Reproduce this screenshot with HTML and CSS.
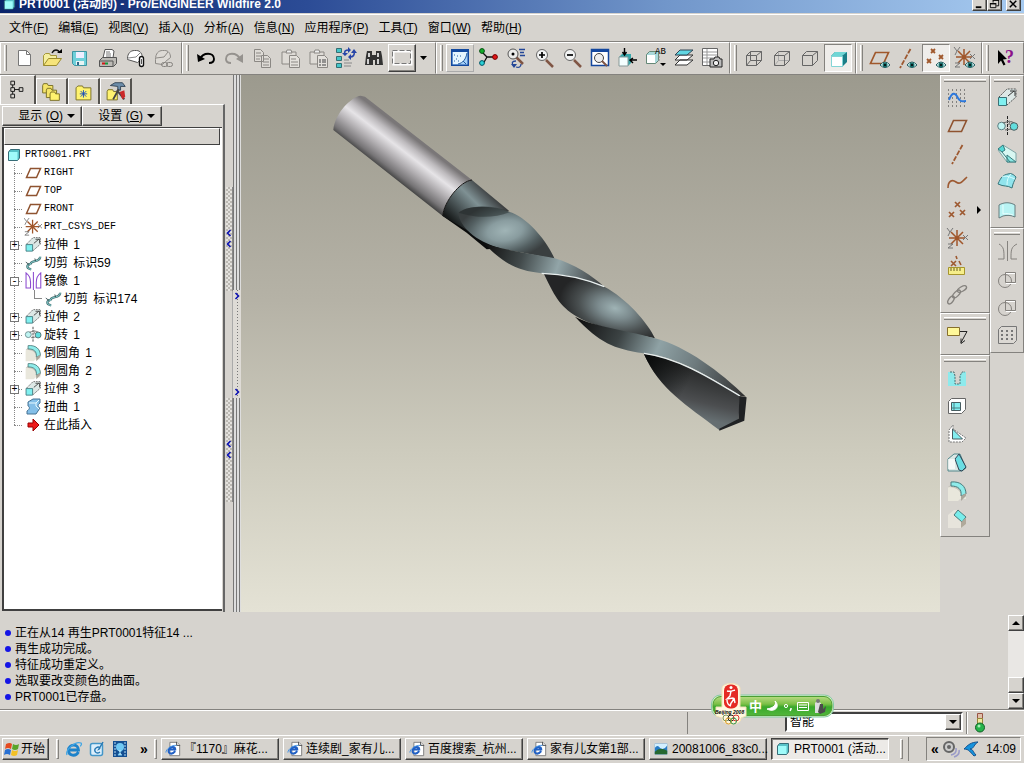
FILE: index.html
```html
<!DOCTYPE html>
<html lang="zh-CN">
<head>
<meta charset="utf-8">
<title>PRT0001 (活动的) - Pro/ENGINEER Wildfire 2.0</title>
<link rel="stylesheet" href="styles.css">
</head>
<body>
<svg class="defs" aria-hidden="true">
  <symbol id="plane" viewBox="0 0 18 18"><path d="M6.500 4.500h10l-4 9h-10z" fill="none" stroke="#8f5330" stroke-width="1.500"/></symbol>
  <symbol id="csys" viewBox="0 0 28 28"><path d="M14 6v16M6 14h16M8 8l12 12M20 8L8 20" stroke="#a0562b" stroke-width="1.500"/><path d="M4 4l3 4 3-4M7 8l-2 4M20 11l5 5m0-5l-5 5M5 20h5l-5 4h5" stroke="#777" fill="none"/></symbol>
  <symbol id="extrude" viewBox="0 0 28 28"><path d="M6 13L14 5h9v8l-9 8" fill="#dde8e6" stroke="#555" stroke-dasharray="2 1"/><path d="M15 12l6-5m-4 0h5v5" fill="none" stroke="#333"/><path d="M5.500 13.500h8v8h-8z" fill="#80f0f0" stroke="#3b7176"/></symbol>
  <symbol id="revolve" viewBox="0 0 28 28"><path d="M14.500 4v20" stroke="#222" stroke-dasharray="3 1"/><path d="M16 13c0-4 2-4 5-2" fill="none" stroke="#555"/><circle cx="8.500" cy="14" r="3.800" fill="#bff4f2" stroke="#5d7f82"/><circle cx="21" cy="14.500" r="3.800" fill="#62dede" stroke="#4d5e60"/><path d="M10 11l7-2m-5 9l6-1" stroke="#666"/></symbol>
  <symbol id="cut" viewBox="0 0 20 18"><path d="M18 2c0 3-2 4-6 5-4 1-5 2-5 4M7 10c-4 1-5 5 1 6" fill="none" stroke="#456f72" stroke-width="2.600"/><path d="M18 2c0 3-2 4-6 5-4 1-5 2-5 4M7 10c-4 1-5 5 1 6" fill="none" stroke="#8fe0df"/><path d="M2 8l4 3M12 4l1 3" stroke="#354c4e"/></symbol>
  <symbol id="mirror" viewBox="0 0 28 28"><path d="M14.500 3v22" stroke="currentColor" stroke-width="1.300"/><path d="M5.500 4v18.500h5.500v-7c0-6-2-9-5.500-11.500zM23.500 4v18.500H18v-7c0-6 2-9 5.500-11.500z" fill="none" stroke="currentColor" stroke-width="1.300"/></symbol>
  <symbol id="round" viewBox="0 0 28 28"><path d="M5 12l6-6 12 8v9h-6l-2 2H5z" fill="#e9e7dc"/><path d="M5 11l6-5c8 0 12 4 12 12l-5 5c1-7-3-12-13-12z" fill="#c8c6bc"/><path d="M8 6c9-1 15 4 15 12l-5 2c1-7-3-10-10-10z" fill="#8eecea" stroke="#4a7a7c"/><path d="M18 20v5l5-5v-3" fill="#aaa69b"/></symbol>
  <symbol id="part" viewBox="0 0 14 14"><path d="M1.500 4l2-2.500h9v8.500l-2 2.500h-9z" fill="#58c3c8" stroke="#376d78"/><path d="M2 4h8.500v8H2z" fill="#a0fbfa"/></symbol>
  <symbol id="ie" viewBox="0 0 18 18"><path d="M5.500 1.500h8l3 3v12h-11z" fill="#fff" stroke="#777"/><path d="M13 1v4h4" fill="#ddd" stroke="#4b4b4b"/><path d="M11.500 11.500c-4 5-9 2-7-2s7-3 7 0H5" fill="none" stroke="#2160c4" stroke-width="2.300"/><path d="M1 13C1 9 8 4 13 5" fill="none" stroke="#348ce6"/></symbol>
  <symbol id="eye" viewBox="0 0 12 8"><path d="M1 4q5-6 10 0-5 5-10 0" fill="#dff" stroke="#23595d"/><circle cx="6" cy="4" r="2.500" fill="#176a67"/><circle cx="6" cy="4" r="1"/></symbol>
  <symbol id="lens" viewBox="0 0 28 28"><path d="M16 16l7 7" stroke="#805645" stroke-width="2.500"/><circle cx="12" cy="11" r="5.500" fill="#f3f4f4" stroke="#666"/></symbol>
  <symbol id="clip" viewBox="0 0 28 28"><path d="M6 8h14v12H6z" fill="#dedbd6" stroke="#8b8884"/><path d="M10 9l1-3h4l1 3z" fill="#eee" stroke="#8b8884"/><path d="M13.500 11.500h7l3 3v9h-10z" fill="#e4e1dc" stroke="#8b8884"/></symbol>
  <symbol id="holes" viewBox="0 0 28 28"><circle cx="12" cy="16" r="6.500" fill="none" stroke="#85827e"/><path d="M12.500 7.500h10v10h-10z" fill="none" stroke="#85827e"/><path d="M13 8.500h9M13 18.500h10" stroke="#fff"/></symbol>
  <symbol id="datumline" viewBox="0 0 28 28"><path d="M19.500 5L9 24" stroke="#9d5931" stroke-width="1.800" stroke-dasharray="5 1.500"/></symbol>
</svg>

<header class="titlebar">
  <svg class="app-icon" viewBox="0 0 14 14"><use href="#part"/></svg>
  <h1>PRT0001 (活动的) - Pro/ENGINEER Wildfire 2.0</h1>
  <div class="winbtns">
    <button aria-label="最小化"><svg viewBox="0 0 14 14"><path d="M3 10h6v2H3z"/></svg></button><button aria-label="还原"><svg viewBox="0 0 14 14"><path d="M5.500 6V3.500h6v6H9M5 3.500h7M2.500 7.500h6v4h-6zM2 7h7" fill="none" stroke="#000"/></svg></button><button class="close" aria-label="关闭"><svg viewBox="0 0 14 14"><path d="M3 4l7 7m0-7l-7 7" stroke="#000" stroke-width="1.600"/></svg></button>
  </div>
</header>

<nav class="menubar">
  <button>文件(<u>F</u>)</button><button>编辑(<u>E</u>)</button><button>视图(<u>V</u>)</button><button>插入(<u>I</u>)</button><button>分析(<u>A</u>)</button><button>信息(<u>N</u>)</button><button>应用程序(<u>P</u>)</button><button>工具(<u>T</u>)</button><button>窗口(<u>W</u>)</button><button>帮助(<u>H</u>)</button>
</nav>

<div class="toolbar">
  <div class="group">
    <button aria-label="新建"><svg viewBox="0 0 28 28"><path d="M8.500 6.500h8l4 4v11h-12z" fill="#fff" stroke="#777"/><path d="M16.500 6.500v4h4" fill="none" stroke="#777"/></svg></button>
    <button aria-label="打开"><svg viewBox="0 0 28 28"><path d="M5.500 21.500v-10l2-2h4l1 2h6v3" fill="#f5efa0" stroke="#a5973a"/><path d="M5.500 21.500l5-7h13l-5 7z" fill="#f6e47a" stroke="#9a8b2d"/><path d="M14 9c2-4 6-4 8 0" fill="none" stroke="#111" stroke-width="1.300"/><path d="M19 9h5V5z"/></svg></button>
    <button aria-label="保存"><svg viewBox="0 0 28 28"><path d="M6.500 7.500h14v14h-12l-2-2z" fill="#6fd0da" stroke="#3f95a2"/><path d="M10 8h8v6h-8z" fill="#eef"/><path d="M10 17h8v4h-8z" fill="#e8f4f4"/><path d="M11 18h2v3h-2z" fill="#368"/></svg></button>
    <button aria-label="打印"><svg viewBox="0 0 28 28"><path d="M9 14l2-8.500h7l2 1.500-1 7" fill="#fff" stroke="#555"/><path d="M12 8h4m-4 2h5m-5 2h5" stroke="#777"/><path d="M5.500 16.500l3-3h14v6l-3 3h-14z" fill="#bcbab5" stroke="#555"/><path d="M6 17h13v5" fill="none" stroke="#555"/><path d="M8 18.500h3v2H8z" fill="#d01818"/><path d="M11 18.500h3v2h-3z" fill="#159a3b"/></svg></button>
    <button aria-label="邮件"><svg viewBox="0 0 28 28"><path d="M5.500 14.500c0-5 3-8 7-8h2c4 0 6 4 6 8l-5 4-10-3z" fill="#fff" stroke="#555"/><path d="M6 14l8-1 5-5" fill="none" stroke="#888"/><rect x="17.500" y="12.500" width="4" height="10" rx="2" fill="#fff" stroke="#111" stroke-width="1.400"/><path d="M19.500 15v5" stroke="#555"/></svg></button>
    <button aria-label="链接邮件" disabled><svg viewBox="0 0 28 28"><path d="M5.500 15.500c0-6 3-9 7-9h2c4 0 6 3 6 7l-5 4-3 3-7-1z" fill="#dddad5" stroke="#8d8a86"/><path d="M6 14l8-1 4-5" fill="none" stroke="#8d8a86"/><rect x="11.500" y="18.500" width="6" height="4" rx="2" fill="none" stroke="#85827e"/><rect x="16.500" y="18.500" width="6" height="4" rx="2" fill="none" stroke="#85827e"/></svg></button>
  </div>
  <div class="group">
    <button aria-label="撤消"><svg viewBox="0 0 28 28"><path d="M8 15c3-7 14-7 14 0 0 3-2 4-5 4" fill="none" stroke="#000" stroke-width="1.900"/><path d="M5 10l1 8 7-3z"/></svg></button>
    <button aria-label="重做" disabled><svg viewBox="0 0 28 28"><path d="M20 15c-3-7-14-7-14 0 0 3 2 4 5 4" fill="none" stroke="#95928e" stroke-width="1.900"/><path d="M23 10v9l-7-4z" fill="#95928e"/></svg></button>
    <button aria-label="复制" disabled><svg viewBox="0 0 28 28"><path d="M6.500 5.500h6l3 3v9h-9zM13.500 11.500h6l3 3v9h-9z" fill="#dedbd6" stroke="#8b8884"/><path d="M8 9h5m-5 3h5m-5 3h4m3 0h6m-6 3h6m-6 3h6" stroke="#8b8884"/></svg></button>
    <button aria-label="粘贴" disabled><svg viewBox="0 0 28 28"><use href="#clip"/><path d="M15 15h5m-5 3h7m-7 3h7" stroke="#8b8884"/></svg></button>
    <button aria-label="选择性粘贴" disabled><svg viewBox="0 0 28 28"><use href="#clip"/><path d="M15 16h2m1 0h4m-7 2h2m1 0h4m-7 3h2m1 0h4" stroke="#777" stroke-width="1.500"/></svg></button>
    <button aria-label="再生"><svg viewBox="0 0 28 28"><path d="M4.500 4.500h5v4h-5zM4.500 12.500h5v4h-5zM4.500 19.500h5v4h-5z" fill="#44c5c8" stroke="#326f74"/><path d="M12 16h5m-5 3h8m-8 3h7" stroke="#888"/><path d="M13 11c-1-4 0-5 4-5m5 2c1 3-1 5-4 5" fill="none" stroke="#2745a8" stroke-width="1.600"/><path d="M16 3v6l3-3zM19 10v6l-3-3zM10 9h6l-3 3zM19 9h6l-3-4z" fill="#2745a8"/></svg></button>
    <button aria-label="查找"><svg viewBox="0 0 28 28"><path d="M7 7h5v4h4V7h5l1 5 1 9h-8v-5h-2v5H5l1-9z" fill="#333"/><path d="M8 9h2v4H8zm9 0h2v4h-2zM7 15h2v5H7zm10 0h2v5h-2z" fill="#d2d2d2"/></svg></button>
    <button class="raised" aria-label="选取框"><svg viewBox="0 0 28 28"><path d="M5.500 7.500h18v13h-18z" fill="none" stroke="#fff" stroke-width="2"/><path d="M4.500 6.500h18v13h-18z" fill="none" stroke="#777" stroke-dasharray="5 2"/></svg></button>
    <button class="drop" aria-label="选取选项"><svg viewBox="0 0 16 28"><path d="M4 12h7l-3.500 4z"/></svg></button>
  </div>
  <div class="group">
    <button class="raised light" aria-label="旋转中心"><svg viewBox="0 0 28 28"><path d="M5 5h18v17H5z" fill="#12499f"/><path d="M6.500 8h15v12.500h-15z" fill="#a6d2fa"/><path d="M7 8h14c-1 7-4 11-9 12H7z" fill="#e4f5ff"/><path d="M21 9c-1 6-4 10-9 11M17 17l3 3" stroke="#225aa0" fill="none"/><path d="M8 11h1m2 1h1m2 0h1m-5 3h1m-3 2h1m3 0h1" stroke="#225aa0"/></svg></button>
    <button aria-label="定向模式"><svg viewBox="0 0 28 28"><path d="M8 8l5 5h9M13 13l-4 7" fill="none" stroke="#111" stroke-width="1.300"/><circle cx="8" cy="7" r="2.400" fill="#12ad29" stroke="#074f12"/><circle cx="21" cy="13" r="2.400" fill="#e01616" stroke="#700"/><circle cx="8" cy="19" r="2.400" fill="#2bd1d6" stroke="#056"/></svg></button>
    <button aria-label="外观"><svg viewBox="0 0 28 28"><path d="M14 13l7 7" stroke="#805645" stroke-width="2.500"/><circle cx="11" cy="10" r="5" fill="#ececea" stroke="#555"/><circle cx="11" cy="10" r="1.500"/><path d="M17 5.500h6m-5 3h4m-4 3h5M12 22c-3-3-2-5 2-5m0 6c3 1 5 0 5-3" fill="none" stroke="#234697" stroke-width="1.300"/><path d="M9 20h6l-3 4z" fill="#234697"/></svg></button>
    <button aria-label="放大"><svg viewBox="0 0 28 28"><use href="#lens"/><path d="M9 11h6m-3-3v6" stroke="#000" stroke-width="1.700"/></svg></button>
    <button aria-label="缩小"><svg viewBox="0 0 28 28"><use href="#lens"/><path d="M9 11h6" stroke="#000" stroke-width="1.700"/></svg></button>
    <button aria-label="重新调整"><svg viewBox="0 0 28 28"><path d="M5.500 5.500h17v16h-17z" fill="#fff" stroke="#14479e" stroke-width="1.500"/><path d="M5 5h18v3H5z" fill="#14479e"/><circle cx="13" cy="14" r="4.500" fill="#eee" stroke="#444"/><path d="M16 17l5 5" stroke="#805645" stroke-width="2"/></svg></button>
    <button aria-label="重定向"><svg viewBox="0 0 28 28"><path d="M5 13l3-3h9v9l-3 3H5z" fill="#36a6a9"/><path d="M5 13h9v9H5z" fill="#f4ffff" stroke="#899"/><path d="M10.500 4v7m-2-3l2 3 2-3M23 16h-7m3-2l-3 2 3 3" fill="none" stroke="#000" stroke-width="1.400"/></svg></button>
    <button aria-label="已命名视图"><svg viewBox="0 0 28 28"><path d="M4.500 10.500l3-3h9v9l-3 3h-9z" fill="#a9d8da" stroke="#687"/><path d="M5 11h8v8H5z" fill="#fff"/><text x="13" y="10" class="glyph">AB</text><path d="M16 13h2m-2 3h2" stroke="#888"/><path d="M18 19h6l-3 3z"/></svg></button>
    <button aria-label="层"><svg viewBox="0 0 28 28"><path d="M5 21l5-5h13l-6 5zM5 16l5-5h13l-6 5z" fill="#fff" stroke="#333"/><path d="M5 11l5-5h13l-6 5z" fill="#61d7e3" stroke="#345"/></svg></button>
    <button aria-label="视图管理器"><svg viewBox="0 0 28 28"><path d="M4.500 4.500h15v17h-15z" fill="#fff" stroke="#666"/><path d="M5 8h14M5 11h14M5 14h14M5 18h14M9 5v16" stroke="#999"/><path d="M12 15h4l1-2h4l1 2h2v8H12z" fill="#bbb" stroke="#222"/><circle cx="18" cy="19" r="2.700" fill="#eee" stroke="#222"/></svg></button>
  </div>
  <div class="group">
    <button aria-label="线框"><svg viewBox="0 0 28 28"><path d="M6.500 11.500h10v10h-10zM10.500 7.500h11v9h-11zM6.500 11.500l4-4m6 4l5-4m-5 14l5-5m-15 5l4-5" fill="none" stroke="#666"/></svg></button>
    <button aria-label="隐藏线"><svg viewBox="0 0 28 28"><path d="M10.500 7.500v9h11M6.500 21.500l4-5" fill="none" stroke="#aaa"/><path d="M6.500 11.500h10v10h-10zM6.500 11.500l4-4h11v9l-5 5m0-10l5-4" fill="none" stroke="#666"/></svg></button>
    <button aria-label="无隐藏线"><svg viewBox="0 0 28 28"><path d="M6.500 11.500h10v10h-10zM6.500 11.500l4-4h11v9l-5 5m0-10l5-4" fill="none" stroke="#666"/></svg></button>
    <button class="pressed" aria-label="着色" aria-pressed="true"><svg viewBox="0 0 28 28"><path d="M7 12l4-4h12v10l-5 5z" fill="#1b7e87"/><path d="M7 12l4-4h12l-5 4z" fill="#70d6d5"/><path d="M7.500 12.500h11v10h-11z" fill="#fff" stroke="#83d5d6"/></svg></button>
  </div>
  <div class="group">
    <button aria-label="基准平面显示"><svg viewBox="0 0 28 28"><path d="M9.500 8.500h13l-5 11h-13z" fill="none" stroke="#a0582c" stroke-width="1.700"/><use href="#eye" x="13" y="17" width="12" height="8"/></svg></button>
    <button aria-label="基准轴显示"><svg viewBox="0 0 28 28"><use href="#datumline" x="-3" width="28" height="28"/><use href="#eye" x="12" y="17" width="12" height="8"/></svg></button>
    <button class="pressed" aria-label="基准点显示" aria-pressed="true"><svg viewBox="0 0 28 28"><path d="M9 5l4 4m0-4l-4 4M5 15l4 4m0-4l-4 4M17 11l4 4m0-4l-4 4" stroke="#a0582c" stroke-width="1.800"/><use href="#eye" x="13" y="17" width="12" height="8"/></svg></button>
    <button aria-label="坐标系显示"><svg viewBox="0 0 28 28"><use href="#csys" width="28" height="28" y="-1"/><use href="#eye" x="14" y="17" width="12" height="8"/></svg></button>
  </div>
  <div class="group">
    <button aria-label="帮助"><svg viewBox="0 0 28 28"><path d="M6 6l9 9-4 .500 2.500 5-2 1-2.500-5L6 20z"/><text x="13" y="19" class="qmark">?</text></svg></button>
  </div>
</div>

<main class="work">
  <aside class="navigator">
    <div class="tabs">
      <button class="on" aria-label="模型树"><svg viewBox="0 0 28 28"><path d="M9.500 4.500h4v4h-4zM9.500 11.500h4v4h-4zM9.500 18.500h4v4h-4zM18.500 11.500h4v4h-4zM11.500 8.500v3m0 4v3m2-5h5" fill="none" stroke="#111"/></svg></button>
      <button aria-label="文件夹浏览器"><svg viewBox="0 0 28 28"><path d="M5 7l1-2h4l1 2h5v8H5z" fill="#f5e56a" stroke="#776d24"/><path d="M9 12l1-2h4l1 2h5v8H9z" fill="#f5e56a" stroke="#776d24"/><path d="M13 16l1-2h4l1 2h4v7H13z" fill="#fff36f" stroke="#776d24"/></svg></button>
      <button aria-label="收藏夹"><svg viewBox="0 0 28 28"><path d="M6.500 9.500l2-2h5l1 2h8v13h-16z" fill="#fff36f" stroke="#776d24"/><path d="M14.500 12v8m-4-4h8m-7-3l6 6m0-6l-6 6" stroke="#194ebb"/></svg></button>
      <button aria-label="连接"><svg viewBox="0 0 28 28"><path d="M5.500 13.500l1-2h5l1 2h4v9h-11z" fill="#fff36f" stroke="#776d24"/><path d="M9 7l5-3h8l3 4h-5v4h-3V8z" fill="#6d8eab" stroke="#345"/><path d="M18 11l-6 11M16 12l8 10" stroke="#444" stroke-width="2"/><path d="M19 14l5-2 1 7-3 3z" fill="#cb2828"/></svg></button>
    </div>
    <div class="nav-page">
      <div class="nav-actions">
        <button>显示 (<u>O</u>)<span class="caret"></span></button><button>设置 (<u>G</u>)<span class="caret"></span></button>
      </div>
      <div class="tree">
        <div class="tree-head"></div>
        <div class="root latin"><svg viewBox="0 0 14 14"><use href="#part"/></svg>PRT0001.PRT</div>
        <ul class="nodes">
          <li class="latin"><i></i><svg><use href="#plane"/></svg>RIGHT</li>
          <li class="latin"><i></i><svg><use href="#plane"/></svg>TOP</li>
          <li class="latin"><i></i><svg><use href="#plane"/></svg>FRONT</li>
          <li class="latin"><i></i><svg viewBox="4 4 21 21"><use href="#csys" width="28" height="28"/></svg>PRT_CSYS_DEF</li>
          <li><i></i><button aria-label="展开">+</button><svg viewBox="3 3 22 22"><use href="#extrude" width="28" height="28"/></svg>拉伸 <span>1</span></li>
          <li><i></i><svg><use href="#cut"/></svg>切剪 <span>标识59</span></li>
          <li><i></i><button aria-label="折叠">-</button><svg class="purple" viewBox="3 3 22 22"><use href="#mirror" width="28" height="28"/></svg>镜像 <span>1</span></li>
          <li class="child"><i></i><svg><use href="#cut"/></svg>切剪 <span>标识174</span></li>
          <li><i></i><button aria-label="展开">+</button><svg viewBox="3 3 22 22"><use href="#extrude" width="28" height="28"/></svg>拉伸 <span>2</span></li>
          <li><i></i><button aria-label="展开">+</button><svg viewBox="3 3 23 23"><use href="#revolve" width="28" height="28"/></svg>旋转 <span>1</span></li>
          <li><i></i><svg viewBox="3 4 22 22"><use href="#round" width="28" height="28"/></svg>倒圆角 <span>1</span></li>
          <li><i></i><svg viewBox="3 4 22 22"><use href="#round" width="28" height="28"/></svg>倒圆角 <span>2</span></li>
          <li><i></i><button aria-label="展开">+</button><svg viewBox="3 3 22 22"><use href="#extrude" width="28" height="28"/></svg>拉伸 <span>3</span></li>
          <li><i></i><svg viewBox="0 0 18 18"><path d="M4 4l5-3h7v4c-3 2-2 4 0 5l-4 6H3v-3c3-2 3-4 1-5z" fill="#84bfe8" stroke="#467293"/><path d="M5 5h7l3-3M12 5v3l3 3" fill="none" stroke="#e8faff"/></svg>扭曲 <span>1</span></li>
          <li><i></i><svg viewBox="0 0 18 18"><path d="M4 7h5V3l6 6-6 6v-4H4z" fill="#ed1c1c" stroke="#900"/></svg>在此插入</li>
        </ul>
      </div>
    </div>
  </aside>
  <div class="sash">
    <button aria-label="折叠导航器"><svg viewBox="0 0 6 20"><path d="M4.500 1L1.500 4l3 3M4.500 12l-3 3 3 3" fill="none" stroke="#0c12b4" stroke-width="1.600"/></svg></button>
    <div></div>
    <button aria-label="折叠导航器"><svg viewBox="0 0 6 20"><path d="M4.500 1L1.500 4l3 3M4.500 12l-3 3 3 3" fill="none" stroke="#0c12b4" stroke-width="1.600"/></svg></button>
  </div>
  <div class="splitter"><button aria-label="展开"><svg viewBox="0 0 6 8"><path d="M1.500 1l3 3-3 3" fill="none" stroke="#0c12b4" stroke-width="1.600"/></svg><svg viewBox="0 0 6 8"><path d="M1.500 1l3 3-3 3" fill="none" stroke="#0c12b4" stroke-width="1.600"/></svg></button></div>
  <section class="viewport" aria-label="模型">
    <svg viewBox="241 75 699 537" preserveAspectRatio="xMinYMin meet">
      <defs>
        <linearGradient id="shank" gradientUnits="userSpaceOnUse" x1="204" y1="279" x2="283" y2="176"><stop offset="0" stop-color="#484848"/><stop offset=".12" stop-color="#777577"/><stop offset=".38" stop-color="#b3b0b3"/><stop offset=".62" stop-color="#e6e4e7"/><stop offset=".8" stop-color="#bdbabd"/><stop offset="1" stop-color="#7a7778"/></linearGradient>
        <linearGradient id="collar" gradientUnits="userSpaceOnUse" x1="385" y1="415" x2="485" y2="315"><stop offset="0" stop-color="#151818"/><stop offset=".35" stop-color="#4d585a"/><stop offset=".65" stop-color="#7f9194"/><stop offset="1" stop-color="#3c3f40"/></linearGradient>
        <radialGradient id="flute1" gradientUnits="userSpaceOnUse" cx="0" cy="0" r="150" gradientTransform="translate(555 452) rotate(-10) scale(1 .58)"><stop offset="0" stop-color="#a0b4b6"/><stop offset=".35" stop-color="#899c9f"/><stop offset=".75" stop-color="#525e60"/><stop offset="1" stop-color="#3a3f40"/></radialGradient>
        <radialGradient id="flute2" gradientUnits="userSpaceOnUse" cx="0" cy="0" r="170" gradientTransform="translate(885 685) rotate(15) scale(1 .6)"><stop offset="0" stop-color="#9fb3b5"/><stop offset=".3" stop-color="#7c8b8e"/><stop offset=".65" stop-color="#4a5051"/><stop offset="1" stop-color="#242526"/></radialGradient>
        <linearGradient id="band1" gradientUnits="userSpaceOnUse" x1="500" y1="500" x2="850" y2="615"><stop offset="0" stop-color="#111"/><stop offset=".3" stop-color="#424a4b"/><stop offset=".6" stop-color="#92a5a8"/><stop offset=".78" stop-color="#667174"/><stop offset="1" stop-color="#383a3b"/></linearGradient>
        <linearGradient id="band2" gradientUnits="userSpaceOnUse" x1="780" y1="720" x2="1270" y2="940"><stop offset="0" stop-color="#111"/><stop offset=".24" stop-color="#3c4344"/><stop offset=".46" stop-color="#8fa2a5"/><stop offset=".68" stop-color="#6f7c7f"/><stop offset="1" stop-color="#333"/></linearGradient>
        <linearGradient id="face3" gradientUnits="userSpaceOnUse" x1="1160" y1="860" x2="1125" y2="1010"><stop offset="0" stop-color="#242525"/><stop offset=".45" stop-color="#3d3f40"/><stop offset=".7" stop-color="#4c4e50"/><stop offset="1" stop-color="#656e71"/></linearGradient>
        <linearGradient id="shade3" gradientUnits="userSpaceOnUse" x1="980" y1="830" x2="1110" y2="900"><stop offset="0" stop-color="#080a0a"/><stop offset="1" stop-color="#080a0a" stop-opacity="0"/></linearGradient>
      </defs>
      <g transform="translate(320 80) scale(.3333)">
        <path d="M368 408l72 50 60 50 80-5-150-120z" fill="#0b0c0c"/>
        <path d="M456 300L567 392 450 455 368 408C372 365 420 306 456 300z" fill="url(#collar)"/>
        <path d="M122 47C95 50 45 98 40 150L368 408C372 365 420 306 456 300L135 50z" fill="url(#shank)"/>
        <path d="M368 408C372 365 420 304 456 300" fill="none" stroke="#151515" stroke-width="3"/>
        <path d="M415 400C430 380 500 370 567 395C620 410 680 480 704 537C650 525 590 515 550 507C480 490 422 450 415 400z" fill="url(#flute1)"/>
        <path d="M416 398C440 378 510 370 570 396C520 415 470 415 416 398z" fill="#222727" opacity=".45"/>
        <path d="M492 490C540 508 600 515 704 535C760 550 820 590 853 620C800 597 735 583 665 580C590 572 550 550 492 490z" fill="url(#band1)"/>
        <path d="M672 582C740 580 800 600 853 620C920 655 985 730 1005 775C930 760 820 740 780 715C720 680 710 660 672 582z" fill="url(#flute2)"/>
        <path d="M665 580Q765 583 853 620" fill="none" stroke="#e8efef" stroke-width="4"/>
        <path d="M765 710C820 740 940 755 1005 775C1100 800 1200 875 1278 950L1262 948C1180 900 1080 830 970 820C880 805 840 790 765 710z" fill="url(#band2)"/>
        <path d="M972 822C1080 835 1180 900 1260 948L1256 1018 1198 1050C1100 975 1020 930 972 822z" fill="url(#face3)"/>
        <path d="M972 822C1080 835 1180 900 1260 948L1256 1018 1198 1050C1100 975 1020 930 972 822z" fill="url(#shade3)"/>
        <path d="M972 820C1080 835 1180 900 1260 948" fill="none" stroke="#e6eded" stroke-width="4"/>
        <path d="M1258 948l22 4-7 70-75 30v-6l58-30z" fill="#202224"/>
      </g>
    </svg>
  </section>
  <div class="palettes">
    <div class="column first">
      <div class="palette">
        <button aria-label="草绘"><svg viewBox="0 0 28 28"><path d="M5 6h19M5 10h19M5 14h19M5 18h19M5 22h19" stroke="#333" stroke-dasharray="1 3"/><path d="M6 16c3-8 6-8 9-2 3 5 5 3 8 3" fill="none" stroke="#2c78dc" stroke-width="2"/></svg></button>
        <button aria-label="基准平面"><svg viewBox="0 0 28 28"><path d="M10.500 8.500h13l-5 11h-13z" fill="none" stroke="#8f5330" stroke-width="1.600"/></svg></button>
        <button aria-label="基准轴"><svg viewBox="0 0 28 28"><use href="#datumline"/></svg></button>
        <button aria-label="基准曲线"><svg viewBox="0 0 28 28"><path d="M5 20c0-7 4-9 8-6s6 0 11-5" fill="none" stroke="#9d5931" stroke-width="1.600"/></svg></button>
        <button aria-label="基准点"><svg viewBox="0 0 28 28"><path d="M12 6l5 5m0-5l-5 5M6 16l5 5m0-5l-5 5M17 14l5 5m0-5l-5 5" stroke="#9d5931" stroke-width="1.700"/></svg></button>
        <button class="flyout" aria-label="基准点选项"><svg viewBox="0 0 8 12"><path d="M2 2v8l4-4z"/></svg></button>
        <button aria-label="坐标系"><svg viewBox="0 0 28 28"><use href="#csys"/></svg></button>
        <button aria-label="分析特征"><svg viewBox="0 0 28 28"><path d="M8 9l5 5m0-5l-5 5M13 4l1 3m2 2l2 4" stroke="#9d5931" stroke-width="1.600"/><path d="M5.500 15.500h16v7h-16z" fill="#f6ee8a" stroke="#a6952d"/><path d="M8 16v3m3-3v3m3-3v3m3-3v3" stroke="#665c20"/></svg></button>
        <button aria-label="链" disabled><svg viewBox="0 0 28 28"><g fill="none" stroke="#85827e" stroke-width="1.400"><ellipse cx="8" cy="20" rx="4.500" ry="2.300" transform="rotate(-55 8 20)"/><ellipse cx="13.500" cy="14" rx="5" ry="2.300" transform="rotate(-45 13.500 14)"/><ellipse cx="19" cy="9" rx="5" ry="2.300" transform="rotate(-30 19 9)"/></g></svg></button>
      </div>
      <div class="palette">
        <button aria-label="注释"><svg viewBox="0 0 28 28"><path d="M4.500 5.500h12v8h-12z" fill="#fff899" stroke="#876f2c"/><path d="M17 9.500h7l-6 11m0-4v5l4-3" fill="none" stroke="#222"/></svg></button>
      </div>
      <div class="palette">
        <button aria-label="孔"><svg viewBox="0 0 28 28"><path d="M5 8h4l3 3v9h5v-9l3-3h3v14H5z" fill="#8deaec"/><path d="M7 8h4l1 4v8h5v-8l2-4h3" fill="none" stroke="#447074" stroke-dasharray="2 1"/></svg></button>
        <button aria-label="壳"><svg viewBox="0 0 28 28"><path d="M5.500 9.500l3-3h14v11l-4 4h-13z" fill="#fff" stroke="#666"/><path d="M8.500 10.500h9v8h-9z" fill="#83eef0" stroke="#475c60"/><path d="M11 11v7m-2-2h8" stroke="#497f84"/></svg></button>
        <button aria-label="筋"><svg viewBox="0 0 28 28"><path d="M6 22V10l4-5v4l13 9-4 4z" fill="#fff" stroke="#777" stroke-dasharray="2 1"/><path d="M9.500 9v10h10z" fill="#83eef0" stroke="#475c60"/></svg></button>
        <button aria-label="拔模"><svg viewBox="0 0 28 28"><path d="M5 11l6-5h6l6 14-4 3H5z" fill="#dce7e5" stroke="#53888b"/><path d="M12 11l4-5 7 13-4 4-3-1z" fill="#6bdde3" stroke="#345"/><path d="M5 11h7v10H5z" fill="#fff" opacity=".7"/></svg></button>
        <button aria-label="倒圆角"><svg viewBox="0 0 28 28"><use href="#round"/></svg></button>
        <button aria-label="倒角"><svg viewBox="0 0 28 28"><path d="M5 11l6-5h6l6 7v7l-5 4H5z" fill="#e7e4dc"/><path d="M11 11l4-5 8 7-4 5z" fill="#78edeb" stroke="#4a787b"/><path d="M18 18v6l5-4v-6" fill="#b0a99b"/></svg></button>
      </div>
    </div>
    <div class="column second">
      <div class="palette">
        <button aria-label="拉伸"><svg viewBox="0 0 28 28"><use href="#extrude"/></svg></button>
        <button aria-label="旋转"><svg viewBox="0 0 28 28"><use href="#revolve"/></svg></button>
        <button aria-label="可变截面扫描"><svg viewBox="0 0 28 28"><path d="M10 5l13 8v9h-9L5 10z" fill="#d8f7f2" stroke="#7fa5a5"/><path d="M5 9l5-4 2 5-3 2z" fill="#55d9d6" stroke="#397a7c"/><path d="M14 15l9 7h-9zM9 12l8 10" fill="#8ce8e4" stroke="#397a7c"/></svg></button>
        <button aria-label="边界混合"><svg viewBox="0 0 28 28"><path d="M5 16c3-7 5-9 10-10 3-1 5 0 8 3-2 5-3 6-4 11-5-3-8-1-14-4z" fill="#91e4ed" stroke="#37757a"/><path d="M9 9c4-2 8 0 13 2M14 17c0-5 1-8 4-11" fill="none" stroke="#d9ffff"/></svg></button>
        <button aria-label="造型"><svg viewBox="0 0 28 28"><path d="M6 9c5-3 11-3 16 0v12c-4-2-8-2-12-1l-4 2z" fill="#b8f3f3" stroke="#667c7e"/><path d="M10 9v9c4-1 7 0 10 1" fill="none" stroke="#e8ffff"/></svg></button>
      </div>
      <div class="palette">
        <button aria-label="镜像" disabled><svg class="gray" viewBox="0 0 28 28"><path d="M14.500 4v20M6 7c5 3 5 6 5 15H5M24 7c-6 3-6 6-6 15h6" fill="none" stroke="currentColor"/></svg></button>
        <button aria-label="合并" disabled><svg viewBox="0 0 28 28"><use href="#holes"/></svg></button>
        <button aria-label="修剪" disabled><svg viewBox="0 0 28 28"><use href="#holes"/></svg></button>
        <button aria-label="阵列" disabled><svg viewBox="0 0 28 28"><path d="M5.500 8.500l3-3h15v14l-3 3h-15z" fill="#dbd8d3" stroke="#777"/><path d="M8 10h12M8 14h12M8 18h12" stroke="#777" stroke-width="2" stroke-dasharray="2 3"/></svg></button>
      </div>
    </div>
  </div>
</main>

<section class="messages">
  <ul>
    <li>正在从14 再生PRT0001特征14 ...</li>
    <li>再生成功完成。</li>
    <li>特征成功重定义。</li>
    <li>选取要改变颜色的曲面。</li>
    <li>PRT0001已存盘。</li>
  </ul>
  <div class="scroll"><button aria-label="向上"><svg viewBox="0 0 14 14"><path d="M3 9h8L7 5z"/></svg></button><div class="track"></div><button class="thumb" aria-label="滑块"></button><button aria-label="向下"><svg viewBox="0 0 14 14"><path d="M3 5h8L7 9z"/></svg></button></div>
</section>

<div class="status">
  <div class="status-left"></div>
  <div class="status-filter">
    <div class="combo"><select aria-label="选取过滤器"><option>智能</option></select><span class="combo-arrow"><svg viewBox="0 0 14 14"><path d="M3 5h8L7 9z"/></svg></span></div>
  </div>
  <div class="status-light"><svg viewBox="0 0 12 22"><path d="M3.500 1.500h5v5h-5z" fill="#dec0aa" stroke="#9a5244"/><path d="M3.500 6.500h5v6h-5z" fill="#efe9a0" stroke="#938638"/><circle cx="6" cy="15.500" r="4.500" fill="#25b34a" stroke="#115f26"/><circle cx="5" cy="14" r="1.500" fill="#a8eeb6"/></svg></div>
  <div class="ime"><svg viewBox="0 0 124 44">
    <defs><linearGradient id="pill" x2="0" y2="1"><stop offset="0" stop-color="#b9db83"/><stop offset=".4" stop-color="#7bc046"/><stop offset=".55" stop-color="#39a82b"/><stop offset="1" stop-color="#51b63b"/></linearGradient></defs>
    <rect x=".500" y="12" width="122" height="22" rx="9" fill="#d9f1c2" stroke="#84c9a6"/><rect x="2" y="13.500" width="119" height="19" rx="8" fill="url(#pill)" stroke="#4c9e34"/>
    <path d="M11 5c0-6 18-6 18 0v19h6v9l-5 2c0 6-6 5-10 7-4-2-9-1-9-7l-6-2v-9h6z" fill="#fff7df" stroke="#f3e0b8"/>
    <rect x="13" y="1.500" width="14" height="24" rx="6" fill="#e52a24"/><circle cx="20" cy="4.500" r="1.500" fill="#fff"/><path d="M16 8c3 1 5 0 8-1m-4 1l-1 5-3 3 6-1c2 3-4 5-2 7M16 17c0 3 1 5 4 6m3-8l1 5" fill="none" stroke="#fff" stroke-width="1.400"/>
    <text x="4" y="31" class="beijing">Beijing 2008</text>
    <g fill="none" stroke-width="1"><circle cx="15" cy="35" r="3" stroke="#7a965c"/><circle cx="20" cy="35" r="3" stroke="#222"/><circle cx="25" cy="35" r="3" stroke="#d33"/><circle cx="17.500" cy="38" r="3" stroke="#dc9b26"/><circle cx="22.500" cy="38" r="3" stroke="#2e9449"/></g>
    <text x="38" y="28" class="zhong">中</text>
    <path d="M64 18c2 4-2 7-8 8 7 4 14-2 8-8z" fill="#fff" stroke="#fff"/><circle cx="75" cy="23" r="1.600" fill="none" stroke="#fff"/><path d="M80 25v1l-1 2" stroke="#fff" stroke-width="1.500" fill="none"/>
    <path d="M86.500 19.500h11v8h-11zM88 22h8m-8 2.500h8" fill="none" stroke="#fff"/><path d="M104 20l2-2 4 2v10h-6z" fill="#ddd"/><path d="M109 21h3v5l3-3-1 6-5 2-2-2z" fill="#4b4b4b"/><circle cx="107" cy="18" r="2" fill="#777"/>
  </svg></div>
</div>

<footer class="taskbar">
  <button class="start"><svg viewBox="0 0 18 18"><path d="M3 4q4-2 6 0L8 9Q5 7 2 9z" fill="#e64b21"/><path d="M10 4q3 2 6 0l-1 5q-3 2-6 0z" fill="#5aa52a"/><path d="M2 10q3-2 6 0l-1 5q-3-2-6 0z" fill="#2970d2"/><path d="M9 10q3 2 6 0l-1 5q-3 2-6 0z" fill="#f2c126"/></svg>开始</button>
  <span class="grip"></span>
  <div class="quick">
    <button aria-label="Internet Explorer"><svg viewBox="0 0 18 18"><path d="M13.500 12c-3 5-10 4-10-2s10-7 10 0H4" fill="none" stroke="#1e83ca" stroke-width="2.800"/><path d="M2 15C0 10 10 1 16 3c1 1 0 3-1 3" fill="none" stroke="#42a6e5" stroke-width="1.300"/></svg></button>
    <button aria-label="显示桌面"><svg viewBox="0 0 18 18"><rect x="2.500" y="3.500" width="12" height="12" rx="2" fill="#dceffc" stroke="#4496c8" stroke-width="1.500"/><path d="M12 12c-4 3-7-2-4-4s5 0 3 1l4-7" fill="none" stroke="#2879b3" stroke-width="1.500"/></svg></button>
    <button aria-label="播放器"><svg viewBox="0 0 18 18"><path d="M2 1h14v16H2z" fill="#144f92"/><path d="M4 2v14M14 2v14" stroke="#b8dff5" stroke-dasharray="2 1"/><circle cx="9" cy="7" r="4" fill="#70c9f4"/><path d="M7 10h4l-4 5h4" fill="#d4f4ff" stroke="#70c9f4"/></svg></button>
  </div>
  <button class="more" aria-label="更多">»</button>
  <span class="grip"></span>
  <div class="tasks">
    <button><svg><use href="#ie"/></svg><span>『1170』麻花...</span></button>
    <button><svg><use href="#ie"/></svg><span>连续剧_家有儿...</span></button>
    <button><svg><use href="#ie"/></svg><span>百度搜索_杭州...</span></button>
    <button><svg><use href="#ie"/></svg><span>家有儿女第1部...</span></button>
    <button><svg viewBox="0 0 18 18"><path d="M2 3h14v12H2z" fill="#277bc5"/><path d="M2 8q3-5 6 0 4 3 8-3V3H2z" fill="#d2efff"/><path d="M2 12q6-6 14-1v4H2z" fill="#266830"/></svg><span>20081006_83c0...</span></button>
    <button class="active"><svg viewBox="-1 -1 16 16"><use href="#part" width="14" height="14"/></svg><span>PRT0001 (活动...</span></button>
  </div>
  <span class="grip"></span><span class="divider"></span>
  <div class="tray"><span>«</span><svg viewBox="0 0 18 18"><circle cx="7" cy="7" r="5" fill="#ccc" stroke="#666" stroke-width="2"/><circle cx="7" cy="7" r="2" fill="#666"/><path d="M9 15q6-1 5-7m-2 9q6-2 5-7" fill="none" stroke="#9a9ac8" stroke-width="1.500"/></svg><svg viewBox="0 0 18 18"><path d="M16 2C9 2 6 5 2 9c5 0 6 3 10 7l2-1c-3-3-3-6-6-6 4 0 4-5 8-7z" fill="#1692dc" stroke="#15518d"/></svg><time>14:09</time></div>
</footer>
</body>
</html>
```
FILE: styles.css
```css
* { box-sizing: border-box; }

:root {
  --face: #d6d3ce;
  --shadow: #84827e;
  --dark: #404040;
}

body {
  margin: 0;
  min-height: 100vh;
  padding-bottom: 5px;
  display: flex;
  flex-direction: column;
  background: #fff;
  color: #000;
  font: 12px/16px "Liberation Sans", "Noto Sans CJK SC", sans-serif;
}

.defs { position: absolute; width: 0; height: 0; }

button {
  margin: 0;
  padding: 0;
  border: 0;
  background: none;
  color: inherit;
  font: inherit;
}

svg { display: block; flex: none; }
ul { list-style: none; margin: 0; padding: 0; }

/* title bar */
.titlebar {
  display: flex;
  align-items: flex-end;
  height: 14px;
  padding: 0 3px 2px 3px;
  overflow: hidden;
  background: linear-gradient(90deg, #0a246a, #2c4c96 30%, #7196ca 65%, #a6caf0);
  border-bottom: 1px solid var(--face);
  color: #fff;
}
.app-icon { width: 13px; height: 14px; }
.titlebar h1 { margin: 0 auto 0 3px; font-size: 12px; line-height: 14px; font-weight: 700; }
.winbtns { display: flex; }
.winbtns button { width: 15px; height: 15px; }
.winbtns svg { width: 13px; height: 13px; }
.winbtns .close { margin-left: 4px; }

.winbtns button, .nav-actions button, .scroll button, .combo-arrow, .start, .tasks button, .raised {
  background: var(--face);
  border: 1px solid;
  border-color: #fff var(--dark) var(--dark) #fff;
  box-shadow: inset -1px -1px var(--shadow);
}

/* menu bar */
.menubar {
  display: flex;
  gap: 10px;
  height: 27px;
  padding: 0 9px;
  background: var(--face);
  border-top: 1px solid #fff;
}

/* main toolbar */
.toolbar {
  display: flex;
  background: var(--face);
  border-top: 1px solid var(--shadow);
  border-bottom: 1px solid var(--shadow);
}
.group {
  display: flex;
  padding: 1px 3px 1px 9px;
  border: 1px solid;
  border-color: #fff var(--shadow) var(--face) #fff;
  background: linear-gradient(90deg, #fff 1px, var(--face) 1px 2px, var(--shadow) 2px 3px) 3px 2px / 3px 26px no-repeat;
}
.group:last-child { flex: 1; }
.group button { width: 28px; height: 28px; }
.group button svg { width: 28px; height: 28px; }
.group .raised svg, .group .pressed svg { margin: -1px; }
.group .light { border-color: #fff #aaa #aaa #fff; box-shadow: none; }
.group .pressed {
  border: 1px solid;
  border-color: var(--shadow) #fff #fff var(--shadow);
  background: #efedea;
}
.group .drop, .group .drop svg { width: 16px; }
.glyph { font: 9px "Liberation Mono", monospace; }
.qmark { font: bold 18px "Liberation Serif", serif; fill: #8b128b; }

/* work area */
.work { flex: 1; display: flex; background: var(--face); }
.navigator { width: 225px; display: flex; flex-direction: column; }

.tabs { display: flex; align-items: flex-end; height: 29px; }
.tabs button {
  width: 32px;
  height: 26px;
  border-top: 1px solid #fff;
  border-right: 2px solid #55534f;
  border-left: 1px solid #fff;
}
.tabs .on { width: 36px; height: 29px; }
.tabs svg { width: 28px; height: 26px; }

.nav-page {
  flex: 1;
  display: flex;
  flex-direction: column;
  border-top: 1px solid #fff;
  border-right: 2px solid #666;
}
.nav-actions { display: flex; padding: 1px 2px; }
.nav-actions button {
  display: flex;
  align-items: center;
  justify-content: flex-end;
  width: 80px;
  height: 20px;
  padding-right: 6px;
}
.caret { margin-left: 4px; border: 4px solid transparent; border-top-color: #000; border-bottom: 0; }

.tree {
  flex: 1;
  margin: 0 1px 1px 2px;
  border: 1px solid var(--dark);
  border-width: 1px 0 2px 2px;
  background: #fff;
}
.tree-head {
  height: 17px;
  margin-right: 2px;
  margin-bottom: 1px;
  background: var(--face);
  border: 1px solid;
  border-color: #fff var(--dark) var(--dark) #fff;
}
.root, .nodes li { display: flex; align-items: center; height: 18px; }
.root { padding-left: 3px; gap: 4px; }
.root svg { width: 14px; height: 14px; }
.nodes {
  margin-left: 10px;
  background: linear-gradient(#888 50%, transparent 50%) 0 0 / 1px 2px repeat-y;
}
.nodes li { position: relative; gap: 2px; white-space: pre; }
.nodes li:last-child { background: linear-gradient(#fff, #fff) 0 100% / 1px 9px no-repeat; }
.nodes li > i { width: 8px; border-top: 1px dotted #888; }
.nodes li > svg { width: 18px; height: 18px; }
.nodes li > button {
  position: absolute;
  left: -4px;
  top: 5px;
  width: 9px;
  height: 9px;
  border: 1px solid #777;
  background: #fff;
  font: 10px/6px "Liberation Mono", monospace;
}
.nodes .child { padding-left: 20px; }
.nodes .child > i { height: 18px; border: 0; background: linear-gradient(#888, #888) 0 0 / 1px 9px no-repeat, linear-gradient(#888, #888) 0 8px / 8px 1px no-repeat; }
.purple { color: #8d4bd0; }
.gray { color: #85827e; }
.latin { font: 10px/18px "Liberation Mono", monospace; }

.sash {
  width: 8px;
  display: flex;
  flex-direction: column;
  padding: 112px 0 34px 1px;
}
.sash > div { height: 107px; border-right: 1px solid #aaa; }
.sash button {
  display: flex;
  align-items: center;
  height: 104px;
  background: repeating-conic-gradient(#bbb8b2 0 25%, #e4e2de 0 50%) 0 0 / 4px 4px;
  border-right: 1px solid #888;
}
.sash svg { width: 6px; height: 20px; }
.splitter {
  width: 8px;
  display: flex;
  align-items: center;
  background: repeating-linear-gradient(90deg, #777 0 1px, #ddd 1px 3px);
}
.splitter button {
  width: 8px;
  height: 108px;
  padding: 2px 0 2px 1px;
  display: flex;
  flex-direction: column;
  justify-content: space-between;
  background: linear-gradient(#777 50%, transparent 50%) 4px 0 / 1px 3px repeat-y, #dedbd6;
}
.splitter svg { width: 6px; height: 8px; }
.viewport {
  flex: 1;
  min-width: 0;
  background: linear-gradient(#9c9a8e, #b5b2a6 42%, #cdcbbd 70%, #e4e2d5);
}
.viewport svg { width: 100%; height: auto; }

/* feature palettes */
.palettes { display: flex; align-items: flex-start; }
.column.first { width: 50px; }
.column.second { width: 34px; }
.palette {
  display: flex;
  flex-wrap: wrap;
  padding: 8px 2px 4px 2px;
  border: 1px solid;
  border-color: #fff var(--shadow) var(--shadow) #fff;
  background: linear-gradient(#fff 1px, var(--face) 1px 2px, var(--shadow) 2px 3px) 50% 3px / calc(100% - 6px) 3px no-repeat;
}
.column.second .palette { padding-bottom: 3px; }
.palette button { width: 28px; height: 28px; }
.palette svg { width: 28px; height: 28px; }
.palette .flyout { width: 14px; padding-left: 4px; }
.palette .flyout svg { width: 8px; height: 12px; }

/* message log */
.messages {
  display: flex;
  justify-content: space-between;
  background: var(--face);
  border-bottom: 1px solid var(--shadow);
}
.messages ul { padding: 13px 5px 4px; }
.messages li { display: flex; align-items: center; gap: 4px; height: 16px; }
.messages li::before { content: ""; width: 6px; height: 6px; border-radius: 3px; background: #1414e6; }
.scroll { width: 16px; display: flex; flex-direction: column; padding-top: 3px; }
.scroll button { width: 16px; height: 16px; }
.scroll svg { width: 14px; height: 14px; }
.track { flex: 1; background: #e9e7e4; }

/* status line */
.status {
  position: relative;
  display: flex;
  justify-content: flex-end;
  height: 25px;
  padding: 1px 0;
  background: var(--face);
  border-top: 1px solid #fff;
}
.status-left { flex: 1; border-right: 1px solid var(--shadow); }
.status-filter { width: 279px; display: flex; justify-content: flex-end; padding-right: 3px; border-right: 1px solid var(--shadow); }
.combo {
  position: relative;
  width: 178px;
  height: 20px;
  border: 2px solid;
  border-color: var(--dark) #fff #fff var(--dark);
}
.combo select {
  width: 100%;
  height: 16px;
  padding: 0 3px;
  border: 0;
  appearance: none;
  background: #fff;
  color: #000;
  font: inherit;
}
.combo-arrow { position: absolute; top: 0; right: 0; width: 16px; height: 16px; pointer-events: none; }
.combo-arrow svg { width: 14px; height: 14px; }
.status-light { width: 57px; padding-left: 6px; border-left: 1px solid #fff; }
.status-light svg { width: 12px; height: 22px; }
.ime { position: absolute; right: 189px; bottom: 8px; width: 124px; height: 44px; }
.beijing { font: italic bold 5px "Liberation Sans", sans-serif; }
.zhong { font: bold 13px "Noto Sans CJK SC", sans-serif; fill: #fff; }

/* task bar */
.taskbar {
  display: flex;
  align-items: center;
  height: 28px;
  padding: 0 3px 2px 2px;
  background: var(--face);
  border-top: 1px solid #fff;
}
.start, .tasks button { display: flex; align-items: center; height: 22px; }
.start { width: 47px; }
.start svg { width: 18px; height: 18px; }
.grip { width: 3px; height: 20px; margin-left: 7px; border: 1px solid; border-color: #fff var(--shadow) var(--shadow) #fff; }
.quick { display: flex; gap: 5px; margin-left: 6px; }
.quick svg { width: 18px; height: 18px; }
.more { width: 20px; height: 22px; margin-left: 5px; font: bold 14px/14px "Liberation Sans", sans-serif; }
.more + .grip { margin-left: 0; }
.tasks { flex: 1; display: flex; gap: 4px; margin: 0 8px 0 4px; }
.tasks button { flex: 1 1 0; min-width: 0; gap: 3px; padding-left: 3px; white-space: nowrap; }
.tasks svg { width: 16px; height: 16px; }
.tasks .active {
  border-color: var(--dark) #fff #fff var(--dark);
  box-shadow: inset 1px 1px var(--shadow);
  background: #eceae7;
}
.tasks + .grip { margin-left: 3px; }
.divider { height: 24px; margin: 0 17px 0 5px; border-left: 1px solid var(--shadow); }
.tray {
  display: flex;
  align-items: center;
  gap: 2px;
  width: 95px;
  height: 24px;
  padding-left: 4px;
  border: 1px solid;
  border-color: var(--shadow) #fff #fff var(--shadow);
}
.tray > span { width: 9px; font: bold 14px/14px "Liberation Sans", sans-serif; }
.tray svg { width: 18px; height: 18px; }
.tray time { margin-left: 4px; }
```
